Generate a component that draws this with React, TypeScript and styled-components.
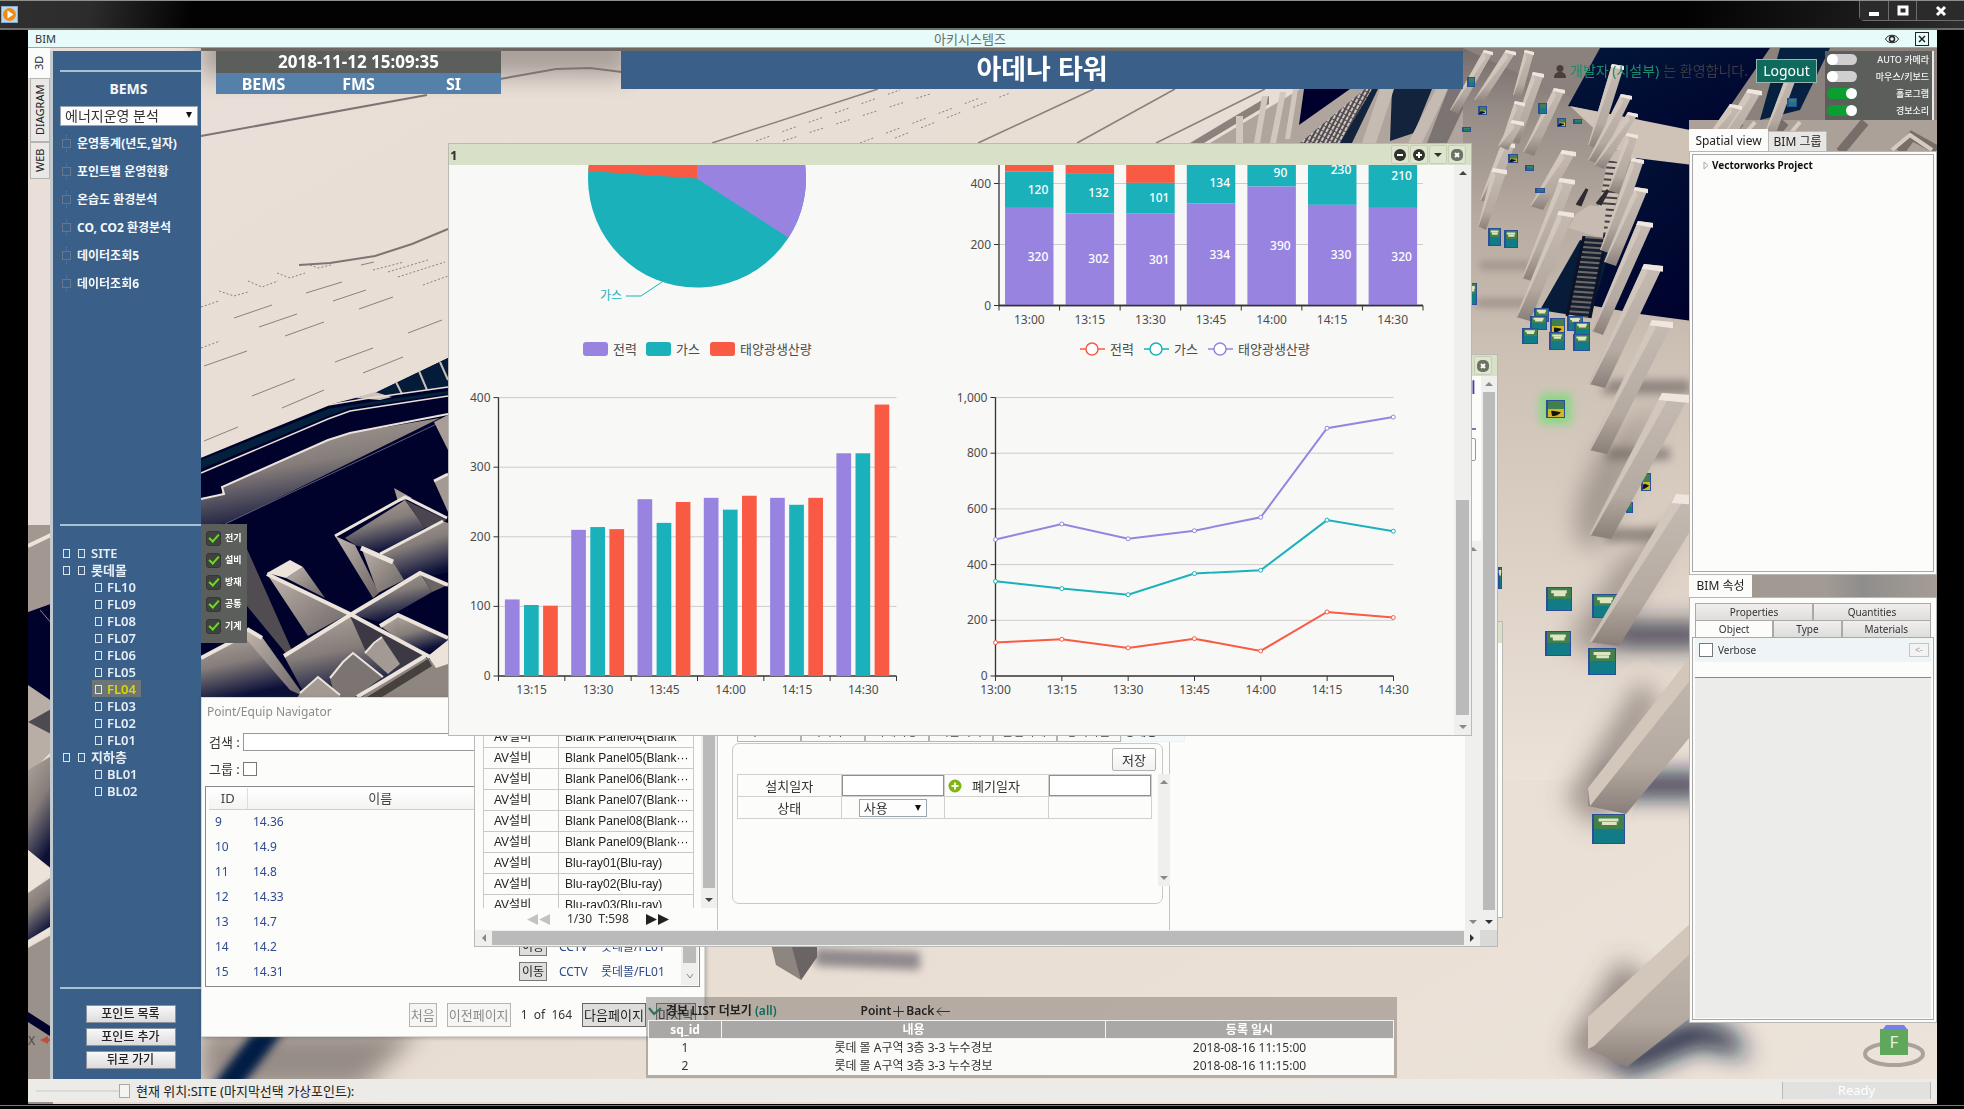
import React from 'react';
import styled, { createGlobalStyle, css } from 'styled-components';

const sans = `"Noto Sans", "Noto Sans CJK KR", sans-serif`;
const gulim = `"Liberation Sans", "Noto Sans CJK KR", sans-serif`;
const navy = '#3a5f88';
const slate = '#5b5e5b';
const purple = '#9884e0';
const teal = '#1ab1ba';
const red = '#f85a44';

const Global = createGlobalStyle`
  * { box-sizing: border-box; }
  body { margin: 0; background: #000; font: 12px/16px ${sans}; color: #333; overflow: hidden; }
  button, input, select { font-family: inherit; margin: 0; padding: 0; border-radius: 0; }
  h1, h2, p, ul { margin: 0; padding: 0; }
  ul { list-style: none; }
`;

/* ---------- frame ---------- */

const Page = styled.div`
  height: 100vh;
  display: flex;
  flex-direction: column;
  background: #000;
`;

const TitleBar = styled.header`
  height: 30px;
  flex: none;
  display: flex;
  justify-content: space-between;
  align-items: center;
  padding-left: 1px;
  border-top: 1px solid #8d8f8d;
  border-bottom: 2px solid #6c6c6c;
  background: linear-gradient(100deg, #303030 0, #2c2c2c 90px, #020202 190px, #020202 1660px, #1c1c1c 1850px, #2e2e2e 100%);
`;

const WindowButtons = styled.div`
  display: flex;
  align-self: flex-start;
  height: 20px;
  border: 1px solid #6d6d6d;
  border-top: 0;
  border-right: 0;
  border-radius: 0 0 0 5px;
`;

const WindowButton = styled.button<{ $wide?: boolean }>`
  width: ${p => (p.$wide ? 48 : 28)}px;
  border: 0;
  border-left: ${p => (p.$wide ? '1px solid #6d6d6d' : '0')};
  background: #2b2b2b;
  display: grid;
  place-items: center;
  & + & { border-left: 1px solid #6d6d6d; }
`;

const Desk = styled.div`
  flex: 1;
  min-height: 0;
  margin: 0 27px 0 28px;
  display: flex;
  flex-direction: column;
`;

const BottomEdge = styled.div`
  height: 4px;
  flex: none;
  margin-top: 1px;
  border-top: 1px solid #777;
`;

const AppBar = styled.div`
  height: 18px;
  flex: none;
  display: grid;
  grid-template-columns: 1fr auto 1fr;
  align-items: center;
  padding: 0 8px 0 7px;
  background: #e8fbfb;
  border-bottom: 1px solid #9fa5a2;
  font-size: 11px;
`;

const AppName = styled.h1`
  padding-right: 24px;
  font-size: 13px;
  font-weight: 400;
  color: #66706c;
`;

const AppTools = styled.div`
  display: flex;
  justify-content: flex-end;
  gap: 16px;
`;

const BareButton = styled.button`
  border: 0;
  background: none;
  display: grid;
  place-items: center;
`;

const Viewport = styled.div`
  position: relative;
  flex: 1;
  min-height: 0;
  display: flex;
  flex-direction: column;
  overflow: hidden;
  background: #e6dcd2;
`;

const SceneSvg = styled.svg`
  position: absolute;
  inset: 0;
  width: 100%;
  height: 100%;
`;

const Main = styled.div`
  position: relative;
  flex: 1;
  min-height: 0;
  display: flex;
`;

/* ---------- left ---------- */

const SideTabs = styled.nav`
  width: 22px;
  display: flex;
  flex-direction: column;
  align-items: flex-end;
`;

const SideTab = styled.button<{ $on?: boolean; $h: number }>`
  width: ${p => (p.$on ? 22 : 20)}px;
  height: ${p => p.$h}px;
  border: 1px solid ${p => (p.$on ? '#fbfbfa' : '#b4b4b2')};
  background: ${p => (p.$on ? '#fbfbfa' : '#e9e8e6')};
  font-size: 11px;
  line-height: 16px;
  color: #222;
  writing-mode: vertical-rl;
  transform: rotate(180deg);
`;

const Sidebar = styled.aside`
  width: 151px;
  margin-top: 3px;
  border-left: 3px solid #c3cbd0;
  background: ${navy};
  color: #f2f6fa;
  display: grid;
  grid-template-rows: 473fr 463fr 92px;
`;

const SideSection = styled.section`
  padding-left: 7px;
  display: flex;
  flex-direction: column;
  & + & > hr { margin-top: 0; }
`;

const Rule = styled.hr`
  width: 100%;
  margin: 19px 0 0;
  border: 0;
  border-top: 2px solid #aac0d3;
`;

const SideTitle = styled.h2`
  margin: 8px 0 8px;
  padding-right: 4px;
  font-size: 14px;
  line-height: 18px;
  text-align: center;
`;

const Picker = styled.div<{ $w?: number; $h: number }>`
  position: relative;
  width: ${p => (p.$w ? p.$w + 'px' : 'auto')};
  height: ${p => p.$h}px;
  display: inline-flex;
  &::after {
    content: '';
    position: absolute;
    right: 6px;
    top: 6px;
    border: 3px solid transparent;
    border-top: 6px solid #111;
    border-bottom: 0;
  }
  select {
    appearance: none;
    width: 100%;
    height: 100%;
    padding-left: 4px;
    border: 1px solid #9aa5ad;
    background: #fdfdfd;
    color: #333;
    font-size: ${p => (p.$w ? 13 : 14)}px;
    line-height: 16px;
  }
`;

const SidePicker = styled(Picker)`margin-right: 3px;`;

const Menu = styled.ul`
  margin-top: 3px;
`;

const MenuButton = styled(BareButton)`
  display: flex;
  align-items: center;
  gap: 5px;
  height: 28px;
  padding-left: 1px;
  color: #f4f8fb;
  font-size: 12px;
  font-weight: 700;
`;

const Tree = styled.ul`
  padding: 18px 0 0 2px;
`;

const TreeButton = styled(BareButton)<{ $child?: boolean; $on?: boolean }>`
  display: flex;
  align-items: center;
  gap: ${p => (p.$child ? 5 : 6)}px;
  height: 17px;
  margin-left: ${p => (p.$child ? 30 : 0)}px;
  padding: 0 5px 0 ${p => (p.$child ? 3 : 1)}px;
  background: ${p => (p.$on ? '#6d7577' : 'none')};
  color: ${p => (p.$on ? '#d8d800' : '#e6eef6')};
  font-size: 13px;
  font-weight: 600;
`;

const TreeBox = styled.i<{ $lead?: boolean }>`
  width: 7px;
  height: 9px;
  margin: 2px ${p => (p.$lead ? 2 : 0)}px 0 0;
  border: 1px solid #dbe5ee;
`;

const SideActions = styled.div`
  display: flex;
  flex-direction: column;
  align-items: center;
  gap: 5px;
  padding: 16px 0 0;
`;

const SideAction = styled.button`
  width: 90px;
  height: 18px;
  border: 1px solid #8b9299;
  background: linear-gradient(#f8f8f8, #dcdcdc);
  color: #222;
  font-size: 12px;
  line-height: 14px;
  font-weight: 500;
`;

/* ---------- stage ---------- */

const Stage = styled.div`
  flex: 1;
  min-width: 0;
  display: flex;
  flex-direction: column;
`;

const Top = styled.div`
  height: 78px;
  margin-top: 3px;
  padding: 0 3px 0 15px;
  display: flex;
  align-items: flex-start;
`;

const Clock = styled.div`
  width: 285px;
  background: #5480aa;
  color: #fff;
  font-weight: 700;
  text-align: center;
`;

const ClockTime = styled.div`
  height: 22px;
  background: ${slate};
  font-size: 17px;
  line-height: 22px;
`;

const ClockTabs = styled.nav`
  display: grid;
  grid-template-columns: repeat(3, 1fr);
  button {
    height: 21px;
    border: 0;
    background: none;
    color: #fff;
    font-size: 16px;
    line-height: 20px;
    font-weight: 700;
  }
`;

const Banner = styled.h2`
  flex: 1;
  height: 38px;
  margin-left: 120px;
  background: ${navy};
  color: #fff;
  font-size: 27px;
  line-height: 36px;
  font-weight: 700;
  text-align: center;
`;

const UserBar = styled.div`
  width: 354px;
  padding-top: 8px;
  display: flex;
  align-items: center;
  justify-content: flex-end;
  gap: 4px;
  font-size: 14px;
  color: #1a8d6d;
  span { color: #4f4a45; padding-right: 4px; opacity: 0.75; }
`;

const Logout = styled.button`
  width: 61px;
  height: 24px;
  border: 1px solid #9cb5ae;
  background: #0d6a5c;
  color: #fff;
  font-size: 14px;
  line-height: 20px;
`;

const Toggles = styled.div`
  width: 109px;
  height: 69px;
  margin-left: 8px;
  padding: 0 3px 0 2px;
  border-right: 2px solid #e9e9e7;
  background: ${slate};
`;

const ToggleRow = styled.label`
  height: 17px;
  display: flex;
  align-items: center;
  justify-content: space-between;
  color: #f4f4f4;
  font-size: 9px;
  line-height: 12px;
  font-weight: 500;
`;

const ToggleInput = styled.input`
  appearance: none;
  width: 30px;
  height: 11px;
  border-radius: 6px;
  background: #cfcfcf;
  display: flex;
  align-items: center;
  &::before {
    content: '';
    width: 11px;
    height: 11px;
    border-radius: 50%;
    background: #fff;
  }
  &:checked { background: #0a9f30; justify-content: flex-end; }
`;

const StageBody = styled.div`
  flex: 1;
  min-height: 0;
  display: flex;
  justify-content: space-between;
`;

const Layers = styled.div`
  width: 46px;
  height: 119px;
  margin-top: 395px;
  padding: 3px 5px;
  background: ${slate};
`;

const LayerRow = styled.label`
  height: 22px;
  display: flex;
  align-items: center;
  gap: 4px;
  color: #fff;
  font-size: 9px;
  font-weight: 700;
  white-space: nowrap;
`;

const LayerCheck = styled.input`
  appearance: none;
  width: 15px;
  height: 15px;
  flex: none;
  border: 1px solid #343634;
  border-radius: 3px;
  background: #3f423f;
  display: grid;
  place-items: center;
  &:checked::before {
    content: '';
    width: 4px;
    height: 8px;
    margin-top: -2px;
    border: solid #6fd92c;
    border-width: 0 2px 2px 0;
    transform: rotate(42deg);
  }
`;

/* ---------- right dock ---------- */

const Dock = styled.aside`
  width: 248px;
  margin-bottom: 56px;
  display: flex;
  flex-direction: column;
`;

const DockTabs = styled.div<{ $shade?: boolean }>`
  height: 22px;
  display: flex;
  align-items: flex-end;
  background: ${p => (p.$shade ? 'linear-gradient(90deg,#9f9890,#a29b94 55%,#8f8d8c 70%,#a59d95)' : 'none')};
`;

const DockTab = styled.button<{ $on?: boolean; $w: number }>`
  width: ${p => p.$w}px;
  height: ${p => (p.$on ? 22 : 20)}px;
  border: 1px solid ${p => (p.$on ? '#fbfbfa' : '#b9b9b7')};
  border-bottom: 0;
  background: ${p => (p.$on ? '#fcfcfb' : '#e7e6e4')};
  color: #222;
  font-size: 12px;
  line-height: 16px;
`;

const DockFrame = styled.div<{ $pad: number }>`
  flex: 1;
  min-height: 0;
  padding: ${p => p.$pad}px 2px 2px;
  background: #fcfcfb;
  border: 1px solid #b7b7b6;
  display: flex;
  flex-direction: column;
`;

const SpatialTree = styled.div`
  flex: 1;
  border: 1px solid #a8a8a8;
  padding: 3px 10px;
  font-size: 10px;
  font-weight: 700;
  color: #111;
  display: flex;
  align-items: flex-start;
  gap: 3px;
  line-height: 14px;
`;

const PropTabs = styled.div<{ $cols: string }>`
  display: grid;
  grid-template-columns: ${p => p.$cols};
  padding: 0 3px;
`;

const PropTab = styled.button<{ $on?: boolean }>`
  height: 17px;
  border: 1px solid #aaa9a8;
  border-bottom: 0;
  background: ${p => (p.$on ? '#fcfcfb' : 'linear-gradient(#f0efee,#dedddc)')};
  color: #333;
  font-size: 10px;
  line-height: 14px;
`;

const PropBody = styled.div`
  flex: 1;
  border: 1px solid #a8a8a8;
  padding: 0 2px 1px;
  display: flex;
  flex-direction: column;
`;

const VerboseRow = styled.div`
  height: 24px;
  padding: 0 2px 0 4px;
  background: #eff4f7;
  display: flex;
  align-items: center;
  justify-content: space-between;
  label { display: flex; align-items: center; gap: 5px; font-size: 10px; }
  button { width: 20px; height: 14px; border: 1px solid #c5c5c5; background: #f3f3f3; color: #999; font-size: 9px; line-height: 10px; }
`;

const Check = styled.input`
  appearance: none;
  width: 14px;
  height: 14px;
  border: 1px solid #777;
  background: #fff;
`;

const Blank = styled.div`
  flex: 1;
  margin-top: 15px;
  border-top: 1px solid #8a8a88;
  background: #ececeb;
`;

const StatusBar = styled.footer`
  position: relative;
  height: 23px;
  margin-bottom: 2px;
  padding: 0 6px 0 8px;
  flex: none;
  display: flex;
  align-items: center;
  gap: 6px;
  background: #edebe8;
  color: #222;
  font-size: 13px;
`;

const Slider = styled.input`
  appearance: none;
  width: 94px;
  height: 14px;
  background: linear-gradient(#dcdad7, #dcdad7) 0 50% / 83px 2px no-repeat;
  &::-webkit-slider-thumb {
    appearance: none;
    width: 11px;
    height: 14px;
    border: 1px solid #a9a9a7;
    background: #f5f4f2;
  }
`;

const Ready = styled.div`
  width: 149px;
  height: 17px;
  margin-left: auto;
  border: solid #b9b9b7;
  border-width: 0 1px;
  background: #e1e1e0;
  color: #fff;
  text-align: center;
`;

/* ---------- floating windows ---------- */

const Floating = styled.section<{ $x: number; $y: number; $w: number; $h: number }>`
  position: absolute;
  left: ${p => p.$x}px;
  top: ${p => p.$y}px;
  width: ${p => p.$w}px;
  height: ${p => p.$h}px;
  display: flex;
  flex-direction: column;
  background: #fcfcfb;
  border: 1px solid #b9bab6;
  overflow: hidden;
`;

const Shadowed = styled(Floating)`
  border-color: #d8d8d5;
  box-shadow: 1px 1px 4px #4446;
`;

const WinHead = styled.header`
  height: 21px;
  flex: none;
  padding: 0 5px 0 1px;
  display: flex;
  align-items: center;
  justify-content: space-between;
  background: #d8e1c7;
  font-size: 13px;
  font-weight: 700;
  div { display: flex; gap: 1px; }
`;

const HeadButton = styled.button`
  width: 18px;
  height: 19px;
  border: 1px solid #c6cfb5;
  border-radius: 2px;
  background: #dde5cf;
  display: grid;
  place-items: center;
`;

const WinBody = styled.div`
  flex: 1;
  min-height: 0;
  display: flex;
`;

const ChartGrid = styled.div`
  flex: 1;
  min-width: 0;
  display: grid;
  grid-template: 207px 363px / 503px 1fr;
  background: #f8f8f7;
  svg { width: 100%; height: 100%; display: block; }
`;

const Track = styled.div<{ $w: number; $h?: number }>`
  width: ${p => p.$w}px;
  height: ${p => (p.$h ? p.$h + 'px' : 'auto')};
  flex: none;
  padding: 6px 2px;
  background: #efefee;
  display: flex;
  flex-direction: column;
  align-items: center;
`;

const Thumb = styled.div<{ $top: number }>`
  flex: 1;
  width: 100%;
  margin: ${p => p.$top}px 0 10px;
  background: #bababa;
`;

const Gap = styled.div`flex: 1;`;

const Arrow = styled.i<{ $dir: 'up' | 'down' | 'left' | 'right'; $c?: string }>`
  border: 4px solid transparent;
  ${p => p.$dir === 'up' && css`border-bottom: 4px solid ${p.$c || '#888'}; border-top: 0;`}
  ${p => p.$dir === 'down' && css`border-top: 4px solid ${p.$c || '#888'}; border-bottom: 0;`}
  ${p => p.$dir === 'left' && css`border-right: 4px solid ${p.$c || '#888'}; border-left: 0;`}
  ${p => p.$dir === 'right' && css`border-left: 4px solid ${p.$c || '#888'}; border-right: 0;`}
`;

const HTrack = styled.div`
  height: 16px;
  flex: none;
  padding: 0 0 0 7px;
  display: flex;
  align-items: center;
  gap: 6px;
  background: #efefee;
`;

const HThumb = styled.div`
  flex: 1;
  height: 14px;
  background: #bababa;
`;

const Corner = styled.div`
  width: 17px;
  height: 16px;
  background: #d9d9d8;
`;

/* equipment window */

const EquipPane = styled.div`
  width: 243px;
  padding-left: 8px;
  border-right: 1px solid #c4c4c2;
  display: flex;
  flex-direction: column;
  justify-content: flex-end;
`;

const EquipList = styled.div`
  height: 182px;
  display: flex;
  gap: 7px;
  overflow: hidden;
`;

const EquipTable = styled.table`
  width: 212px;
  height: max-content;
  table-layout: fixed;
  border-collapse: collapse;
  font: 12px/16px ${gulim};
  color: #222;
  td { height: 21px; padding: 0 2px 0 6px; border: 1px solid #c9c9c7; white-space: nowrap; overflow: hidden; }
  td:first-child { width: 75px; padding-left: 10px; }
`;

const EquipPager = styled.div`
  height: 22px;
  padding-left: 44px;
  display: flex;
  align-items: center;
  gap: 17px;
  font-size: 12px;
  white-space: pre;
`;

const FormPane = styled.div`
  width: 452px;
  padding: 0 0 26px 14px;
  border-right: 1px solid #c4c4c2;
  display: flex;
  flex-direction: column;
  justify-content: flex-end;
`;

const FormTabs = styled.div`
  display: flex;
  padding-left: 5px;
  margin-bottom: 1px;
`;

const FormTab = styled.button<{ $on?: boolean }>`
  width: 64px;
  flex: none;
  height: 20px;
  border: 1px solid ${p => (p.$on ? '#eef4f5' : '#b4b4b2')};
  background: ${p => (p.$on ? '#f3f8f9' : '#fafaf9')};
  color: #444;
  font-size: 12px;
  font-weight: ${p => (p.$on ? 700 : 400)};
  text-align: left;
  padding-left: ${p => (p.$on ? 2 : 8)}px;
  line-height: 16px;
`;

const FormBox = styled.div`
  width: 431px;
  height: 161px;
  padding: 4px 0 0 4px;
  border: 1px solid #c9c9c7;
  border-radius: 7px;
`;

const SaveRow = styled.div`
  display: flex;
  justify-content: flex-end;
  padding-right: 6px;
  button {
    width: 44px;
    height: 23px;
    border: 1px solid #b2b2b0;
    border-radius: 2px;
    background: linear-gradient(#fff, #f1f1f0);
    color: #333;
    font-size: 13px;
    line-height: 18px;
  }
`;

const FormRow = styled.div`
  display: flex;
  gap: 6px;
  margin-top: 3px;
`;

const FormTable = styled.table`
  width: 415px;
  flex: none;
  height: 45px;
  table-layout: fixed;
  border-collapse: collapse;
  font-size: 13px;
  td, th { height: 22px; padding: 0; border: 1px solid #d0d0ce; text-align: center; font-weight: 400; line-height: 16px; }
  input { display: block; width: 100%; height: 21px; border: 1px solid #8f8f8d; background: #fff; }
`;

const PlusLabel = styled.div`
  display: flex;
  align-items: center;
  gap: 10px;
  padding-left: 3px;
`;

const RestPane = styled.div`
  flex: 1;
  display: flex;
  flex-direction: column;
`;

const RestHead = styled.div`
  height: 165px;
  padding: 2px 5px 0 200px;
  h2 { height: 52px; border-bottom: 2px solid #7f74bb; color: #553f9d; font-size: 14px; line-height: 18px; text-align: right; }
  button { display: block; width: 40px; height: 23px; margin: 8px 0 0 auto; border: 1px solid #999; border-radius: 2px; background: #fcfcfb; }
`;

/* navigator */

const NavTitle = styled.div`
  height: 30px;
  padding: 6px 0 0 5px;
  color: #8b8b89;
`;

const NavField = styled.div`
  height: 27px;
  padding-left: 7px;
  display: flex;
  align-items: center;
  gap: 3px;
  label { width: 31px; font-size: 13px; color: #333; white-space: nowrap; }
  input[type='text'] { flex: 1; height: 18px; margin-right: 20px; border: 1px solid #999; }
`;

const NavBox = styled.div`
  height: 201px;
  margin: 4px 4px 0 3px;
  padding: 1px 1px 1px 3px;
  border: 1px solid #8a8a88;
  display: flex;
`;

const NavTable = styled.table`
  flex: 1;
  height: max-content;
  table-layout: fixed;
  border-collapse: collapse;
  color: #2f4a8c;
  th { height: 21px; padding: 0; font-weight: 400; font-size: 13px; color: #444; background: linear-gradient(#fff, #f3f3f2); border-bottom: 1px solid #cfcfcd; }
  th:first-child { border-right: 1px solid #ddd; }
  td { height: 25px; padding: 0 0 0 6px; white-space: nowrap; }
  button { width: 28px; height: 19px; border: 1px solid #777; background: #dededd; color: #222; font-size: 12px; line-height: 14px; }
`;

const Pager = styled.div`
  flex: 1;
  display: flex;
  align-items: center;
  justify-content: flex-end;
  gap: 10px;
  padding: 6px 8px 0 0;
  font-size: 12px;
  color: #333;
  white-space: pre;
`;

const PageButton = styled.button<{ $w: number; $off?: boolean }>`
  width: ${p => p.$w}px;
  height: 24px;
  border: 1px solid ${p => (p.$off ? '#b5b5b3' : '#666')};
  background: ${p => (p.$off ? '#f5f5f4' : '#dededd')};
  color: ${p => (p.$off ? '#8d8d8b' : '#222')};
  font-size: 13px;
  line-height: 18px;
  white-space: nowrap;
`;

/* alarm list */

const Alarm = styled.section`
  position: absolute;
  left: 618px;
  top: 949px;
  width: 751px;
  height: 81px;
  padding: 5px 3px 3px 2px;
  background: rgba(110, 100, 94, 0.42);
`;

const AlarmHead = styled.div`
  height: 18px;
  display: flex;
  align-items: center;
  gap: 4px;
  color: #222;
  font-weight: 600;
  font-size: 12px;
  em { color: #0d6a5c; font-style: normal; }
  p { display: flex; align-items: center; gap: 2px; margin-left: 80px; }
`;

const AlarmTable = styled.table`
  width: 100%;
  table-layout: fixed;
  border-collapse: collapse;
  background: #fafaf9;
  color: #333;
  font-size: 12px;
  text-align: center;
  th { height: 18px; padding: 0; border: 1px solid #f4f4f3; background: #a9a8a6; color: #fff; line-height: 14px; }
  td { height: 18px; padding: 0; line-height: 16px; }
  th:nth-child(1) { width: 73px; }
  th:nth-child(3) { width: 288px; }
`;

const Cube = styled.button`
  position: absolute;
  right: 9px;
  bottom: 12px;
  width: 68px;
  height: 44px;
  border: 0;
  background: none;
`;

/* ---------- drawings ---------- */

/* top-left x, y, top width, bottom-left x, y, bottom width */
type Pillar = [number, number, number, number, number, number];

const pillars: Pillar[] = [
  [1484, 50, 9, 1450, 110, 8], [1506, 50, 10, 1474, 100, 8], [1525, 50, 9, 1513, 95, 8], [1533, 72, 11, 1510, 140, 9],
  [1515, 101, 10, 1500, 146, 9], [1554, 88, 11, 1523, 152, 11], [1612, 64, 12, 1588, 145, 10], [1621, 94, 11, 1588, 160, 11],
  [1628, 112, 10, 1594, 165, 10], [1748, 89, 14, 1700, 168, 14], [1730, 104, 12, 1698, 150, 12], [1790, 66, 10, 1762, 140, 10],
  [1502, 142, 13, 1480, 200, 12], [1512, 120, 12, 1498, 146, 10], [1493, 168, 14, 1478, 226, 8], [1562, 150, 14, 1530, 206, 13],
  [1560, 178, 15, 1522, 278, 13], [1627, 133, 11, 1608, 190, 11], [1632, 158, 12, 1600, 250, 12],
  [1635, 187, 13, 1604, 262, 12], [1559, 211, 15, 1516, 317, 14], [1638, 221, 15, 1592, 331, 11], [1644, 264, 19, 1589, 384, 16],
  [1652, 320, 21, 1589, 450, 18], [1662, 393, 28, 1589, 535, 22], [1676, 494, 36, 1589, 642, 30],
];

type Sign = [number, number, number, number, number?];

const signs: Sign[] = [
  [1488, 228, 13, 18], [1504, 230, 14, 18], [1538, 103, 9, 11], [1557, 118, 9, 9, 1], [1573, 119, 9, 5],
  [1478, 106, 9, 9, 1], [1508, 154, 10, 9, 1], [1525, 165, 9, 6], [1535, 188, 10, 5], [1467, 77, 8, 10], [1462, 127, 9, 5], [1466, 283, 11, 22],
  [1534, 308, 15, 14], [1530, 316, 17, 14], [1522, 328, 16, 16], [1567, 316, 16, 15], [1550, 318, 15, 16, 1],
  [1549, 332, 16, 18], [1574, 322, 16, 14], [1573, 334, 17, 17], [1546, 400, 19, 18, 1],
  [1546, 587, 26, 24], [1545, 631, 26, 25], [1498, 567, 4, 22], [1787, 98, 10, 9],
];

const frontSigns: Sign[] = [[1588, 639, 28, 25], [1593, 791, 32, 0]];

const lower: { pts: string; side: string }[] = [
  { pts: '1700,645 1700,725 1626,814 1588,806 1588,788', side: '1700,645 1700,668 1590,806 1588,788' },
  { pts: '1700,915 1700,1010 1627,1067 1588,1049 1588,1017', side: '1700,915 1700,944 1594,1046 1588,1049 1588,1017' },
];

const rooms = '#a39a93';
const rim = '#ece3da';

function SignMark({ s }: { s: Sign }) {
  const [x, y, w, h, cam] = s;
  return (
    <g>
      <rect x={x} y={y} width={w} height={h} fill="#2a4f98" />
      <rect x={x + 2} y={y + 1} width={w - 3} height={h / 2 - 1} fill="#417f4c" />
      <rect x={x + 2} y={y + h / 2} width={w - 3} height={h / 2 - 1} fill={cam ? '#d3b722' : '#127c86'} />
      {h > 12 && !cam ? <path d={`M${x + w * 0.2} ${y + h * 0.2}h${w * 0.6}M${x + w * 0.3} ${y + h * 0.32}h${w * 0.45}`} stroke="#dfe5bf" strokeWidth={h > 20 ? 3 : 2} /> : null}
      {cam ? <path d={`M${x + w * 0.3} ${y + h * 0.62}l${w * 0.45} ${h * 0.08}-3 ${h * 0.12}-${w * 0.25} ${h * 0.05}Z`} fill="#111" stroke="#111" /> : null}
    </g>
  );
}

function Scene() {
  return (
    <SceneSvg viewBox="28 48 1909 1056" preserveAspectRatio="xMinYMin slice" aria-hidden>
      <defs>
        <linearGradient id="floor" x1="0" y1="0" x2="1" y2="1">
          <stop offset="0" stopColor="#e9dfd8" /><stop offset=".55" stopColor="#e8ddd2" /><stop offset="1" stopColor="#ece3da" />
        </linearGradient>
        <linearGradient id="wall" x1="0" y1="0" x2="0.35" y2="1">
          <stop offset="0" stopColor="#b0a69e" /><stop offset=".5" stopColor="#857d7a" /><stop offset="1" stopColor="#0b1038" />
        </linearGradient>
        <linearGradient id="face" x1="0" y1="0" x2="1" y2="1">
          <stop offset="0" stopColor="#c0b5ac" /><stop offset="1" stopColor="#6b6464" />
        </linearGradient>
        <linearGradient id="post" x1="0" y1="0" x2="0" y2="1">
          <stop offset="0" stopColor="#c6bbb2" /><stop offset=".7" stopColor="#b5aaa1" /><stop offset="1" stopColor="#897f79" />
        </linearGradient>
        <linearGradient id="hall" x1="0" y1="0" x2="0" y2="1">
          <stop offset="0" stopColor="#756d6b" /><stop offset=".12" stopColor="#968c86" /><stop offset=".35" stopColor="#b9ada3" /><stop offset=".6" stopColor="#cdc1b6" /><stop offset="1" stopColor="#ddd1c6" />
        </linearGradient>
        <linearGradient id="hallEnd" x1="0" y1="0" x2="0" y2="1">
          <stop offset="0" stopColor="#ddd1c6" /><stop offset="1" stopColor="#ece2d8" />
        </linearGradient>
        <linearGradient id="deep" x1="0" y1="0" x2="1" y2="1">
          <stop offset="0" stopColor="#02173a" /><stop offset="1" stopColor="#00002c" />
        </linearGradient>
        <filter id="soft" x="-50%" y="-50%" width="200%" height="200%"><feGaussianBlur stdDeviation="12" /></filter>
        <filter id="glow" x="-50%" y="-50%" width="200%" height="200%"><feGaussianBlur stdDeviation="4" /></filter>
        <pattern id="steps" width="8" height="5" patternUnits="userSpaceOnUse" patternTransform="rotate(4)">
          <rect width="8" height="5" fill="#17202f" /><rect width="8" height="2" fill="#6d6a6c" />
        </pattern>
        <pattern id="lightSteps" width="8" height="6" patternUnits="userSpaceOnUse" patternTransform="rotate(4)">
          <rect width="8" height="6" fill="#cbbfb6" /><rect width="8" height="2" fill="#463f42" />
        </pattern>
        <pattern id="mesh" width="4" height="5" patternUnits="userSpaceOnUse" patternTransform="rotate(28)">
          <rect width="4" height="5" fill="#4e4a50" /><rect width="2" height="4" fill="#cfc5bd" />
        </pattern>
      </defs>
      <rect x="28" y="48" width="1909" height="1056" fill="url(#floor)" />

      <g fill="none" stroke="#7e7476" strokeWidth="2">
        <path d="M201 136 427 95M500 79 556 69 590 68 622 72M299 265 330 263 375 256 412 244 448 229" />
      </g>
      <g fill="none" stroke="#8b817b" strokeWidth="1">
        <path d="M712 143 878 89M978 143 1094 89M1077 143 1175 89M1156 143 1265 89" strokeWidth="1.5" />
        <path d="M234 318 272 305M259 327 297 314M285 336 324 322M204 366 247 351M252 396 295 379M282 408 324 390M204 441 238 427M306 293 342 282M333 301 366 290M359 309 393 297M335 362 373 348M363 373 403 357M408 333 442 320M361 265 374 262" />
        <path d="M219 291 234 296 248 292M248 281 262 287 278 281M277 273 290 278 305 273M310 265 318 268 331 265M201 307 219 301M201 348 220 341M373 270 404 262M388 272 428 260M398 277 445 262M423 285 448 276" strokeDasharray="2 2" />
        <path d="M756 141 900 90M783 141 930 94M860 143 985 96M895 138 1010 93" strokeDasharray="2 2 2 2 2 2 2 14" />
      </g>

      <path d="M201 457 328 405 375 393 448 358V700H201Z" fill="#00022c" />
      <path d="M375 393 448 358V388L380 397Z" fill="#041b3a" />
      <path d="M355 398 375 392 392 397 380 400Z" fill="#cfc4bb" />
      <path d="M396 382 402 394M419 371 427 390M440 362 448 380" stroke="#c8beb5" strokeWidth="2" />
      <path d="M201 457 328 405 370 398 448 387M201 473 328 419 350 411 448 396" fill="none" stroke="#e8dfd6" strokeWidth="1.500" />
      <path d="M201 460 328 409 370 402 448 391V394L350 408 328 416 201 469Z" fill="#03213c" />
      <path d="M201 498 222 495 222 487 328 440 350 433 440 418 228 523 201 527Z" fill="url(#wall)" />
      <path d="M201 499 224 494 222 487 328 440 350 433 448 414" fill="none" stroke={rim} strokeWidth="2" />
      <path d="M225 524 445 420" stroke="#5d5f78" strokeWidth="1" />
      <path d="M434 422 448 415V450Z" fill="#a89e97" />
      <path d="M434 481 448 474V512Z" fill={rooms} /><path d="M448 474 434 481" stroke={rim} strokeWidth="3" />

      <path d="M394 488 412 498 398 502Z" fill={rooms} />
      <path d="M335 536 355 545 379 593 373 598Z" fill="url(#face)" />
      <path d="M345 538 405 500 425 528 380 554 361 547 355 545Z" fill="url(#wall)" />
      <path d="M405 500 447 520 425 528Z" fill="#4b4550" />
      <path d="M380 554 443 521 448 523V572L404 582 393 562Z" fill="url(#wall)" />
      <path d="M361 547 393 562 404 580 378 593Z" fill="url(#face)" />
      <path d="M335 536 405 497 447 518M380 554 443 521" fill="none" stroke={rim} strokeWidth="3" />
      <path d="M361 548 393 562" stroke={rim} strokeWidth="5" />

      <path d="M247 549 302 673 247 606Z" fill="#514b52" />
      <path d="M267 574 350 613 308 636Z" fill="url(#face)" />
      <path d="M303 567 325 598 286 578Z" fill="url(#face)" />
      <path d="M267 573 290 560 303 567 286 578Z" fill={rim} />

      <path d="M350 614 420 573 432 592 380 622Z" fill="url(#wall)" />
      <path d="M420 573 448 585 432 592Z" fill="#6c6566" />
      <path d="M380 626 398 615 412 636 400 640Z" fill="url(#face)" />
      <path d="M398 615 448 638V648L425 652 400 640Z" fill="url(#wall)" />
      <path d="M284 656 350 616 423 655 357 697H306Z" fill="url(#wall)" />
      <path d="M350 616 423 655 400 668 366 652Z" fill="#3c3844" />
      <path d="M201 658 247 634 302 697H201Z" fill="url(#wall)" />
      <path d="M247 628 262 637 305 697 290 690 247 640Z" fill="url(#face)" />
      <path d="M365 653 382 637 400 664 388 674Z" fill={rooms} />
      <path d="M330 678 343 662 353 653 383 677 355 697H335Z" fill="#7c7472" />
      <path d="M300 693 318 677 340 695V700H296Z" fill={rooms} />
      <path d="M365 653 374 643 382 637M330 678 343 662 353 653 383 677M300 693 318 677 340 695" fill="none" stroke={rim} strokeWidth="2" />
      <path d="M357 700 423 657 448 664V700Z" fill="#8f8680" />
      <path d="M367 697 428 659 432 666 382 697Z" fill="#46413f" />
      <path d="M428 656 448 640V664L436 668Z" fill={rim} />
      <path d="M267 574 350 614 430 657M284 656 350 615 420 573 448 585M380 626 398 615 448 638M357 697 425 656M201 658 235 640M247 629 262 638" fill="none" stroke={rim} strokeWidth="4" />

      <g>
        <rect x="28" y="48" width="25" height="480" fill="#e9dfd8" />
        <path d="M28 525H53V603L28 612Z" fill="#a39891" /><path d="M28 546 53 534" stroke={rim} strokeWidth="4" />
        <path d="M28 612 53 603V700H28Z" fill="#00022c" /><path d="M40 610 53 625" stroke="#8b8580" />
        <path d="M28 685 53 702V750L28 775Z" fill="#b9aea5" /><path d="M28 722 53 708V735Z" fill="#4d4a52" />
        <path d="M28 770 53 755V870L28 850Z" fill="url(#wall)" /><path d="M28 850 53 872 28 893Z" fill={rim} />
        <path d="M28 893 53 876V925L28 940Z" fill="url(#wall)" /><path d="M28 944 53 928" stroke={rim} strokeWidth="4" />
        <path d="M28 948 53 934V1104H28Z" fill="#9b918b" /><path d="M28 1012 53 1028V1038L28 1022Z" fill="#00022c" />
        <path d="M40 1040 48 1036V1044Z" fill="#c1503a" /><path d="M45 1040H53" stroke="#c1503a" strokeWidth="3" />
        <text x="28" y="1045" fontSize="12" fontFamily="Noto Sans" fill="#4b4545">X</text>
      </g>

      <rect x="201" y="30" width="430" height="46" fill="#7d7470" opacity=".6" filter="url(#soft)" />
      <path d="M201 49.500H1463" stroke="#6f6764" strokeWidth="3" />
      <path d="M1210 143 1300 89H1480V143Z" fill="#b0a59d" />
      <path d="M1304 89H1350L1299 125Z" fill="#00002c" />
      <path d="M1300 143 1365 89H1372L1348 143Z" fill="url(#mesh)" />
      <path d="M1235 116 1269 96V104L1204 143H1190Z" fill="#8b827d" />
      <path d="M1236 116h7v27h-7ZM1262 96h6l-8 47h-6ZM1280 92h6l-10 51h-6ZM1293 89h5l-8 50h-5Z" fill="#d1c7be" />
      <path d="M1340 143 1372 89H1378L1352 143ZM1392 89h40l-18 44-24 8Z" fill="#14233c" />
      <path d="M1380 89h14l-18 54h-14ZM1436 89h12l-26 54h-14Z" fill="#c6bbb2" />
      <path d="M1448 89h15v20l-16 34h-20Z" fill="#7c7472" />

      <path d="M1463 48H1700V560H1463Z" fill="url(#hall)" />
      <path d="M1463 560H1700V780H1463Z" fill="url(#hallEnd)" />
      <path d="M1463 48H1937V152H1689Z" fill="#8b827d" />
      <path d="M1600 48H1770L1700 150 1640 120 1568 106Z" fill="url(#deep)" />
      <path d="M1570 106 1640 120 1700 132V165L1625 158Z" fill="#cfc2b6" />
      <path d="M1780 48H1830L1800 110 1760 120Z" fill="#06203f" />
      <path d="M1636 158 1700 166V322L1640 314 1560 300 1600 240Z" fill="url(#deep)" />
      <path d="M1540 310 1580 240 1610 250 1590 318Z" fill="#061c38" />
      <path d="M1608 158 1627 160 1607 238 1596 222Z" fill="url(#lightSteps)" />
      <path d="M1584 236 1606 238 1588 318 1567 314Z" fill="url(#steps)" />
      <path d="M1584 236 1567 316M1606 238 1590 318" stroke="#0e1226" strokeWidth="3" />
      <path d="M1608 153 1620 150 1627 155 1623 163 1607 160ZM1576 214 1590 205 1606 208 1603 238 1568 228Z" fill="#c8bcb2" />
      <path d="M1610 152 1609 142 1606 155M1627 155 1630 143 1624 157M1580 206 1587 189 1577 205M1600 205 1608 190 1597 204" stroke="#2d2b31" strokeWidth="3" fill="none" />
      <path d="M1689 120H1937V152H1689Z" fill="#aca199" />
      <path d="M1715 152 1740 122M1760 152 1785 122M1840 152 1865 122M1900 152 1912 136 1937 150" stroke="#776e6a" strokeWidth="9" fill="none" />
      <path d="M1730 152 1755 122M1775 152 1800 122M1892 150 1910 135 1932 150" stroke="#d6cbc1" strokeWidth="4" fill="none" />

      <g fill="#5e5552" opacity=".55" filter="url(#glow)">
        <path d="M1480 263h70v5h-70ZM1475 300h60v6h-60ZM1610 380h80v14h-90ZM1610 448h60v12h-66ZM1610 528h60v14h-66Z" />
      </g>
      <path d="M1578 500 1575 540 1600 550 1660 400 1600 450ZM1565 640 1600 660 1680 520 1620 560Z" fill="#6f6661" opacity=".5" filter="url(#soft)" />
      <g filter="url(#soft)">
        <path d="M1610 625H1710V645H1610Z" fill="#1d2437" />
        <path d="M1565 800 1640 680 1660 700 1600 830Z" fill="#6f655f" opacity=".6" />
        <path d="M1600 775H1710V795H1615Z" fill="#0c1733" />
        <path d="M1565 1050 1620 960 1650 980 1600 1070Z" fill="#5a504c" opacity=".6" />
        <path d="M1600 1062 1690 1020 1730 1030 1750 1058 1700 1045 1630 1075Z" fill="#0a1a38" />
      </g>
      <SignMark s={[1641, 473, 10, 18, 1]} />
      <SignMark s={[1626, 502, 7, 11]} />
      <SignMark s={[1592, 594, 26, 24]} />
      {pillars.map(([x, y, w, bx, by, bw], i) => (
        <g key={i}>
          <path d={`M${x} ${y}L${x + w} ${y + 2}L${bx + bw} ${by + 4}L${bx} ${by}Z`} fill="url(#post)" />
          <path d={`M${x} ${y}L${x + w * 0.18} ${y + 8}L${bx + bw * 0.1} ${by}L${bx} ${by}Z`} fill="#d6cbc1" opacity=".8" />
          <path d={`M${x} ${y}L${x + w} ${y + 2}L${x + w} ${y + 3 + w / 4}L${x - w / 8} ${y + w / 4}Z`} fill="#efe7df" />
        </g>
      ))}
      {lower.map((p, i) => (
        <g key={i}><polygon points={p.pts} fill="url(#post)" /><polygon points={p.side} fill="#d3c7bc" /></g>
      ))}
      <rect x="1540" y="394" width="31" height="30" fill="#58e65a" opacity=".6" filter="url(#glow)" />
      {signs.map((s, i) => <SignMark key={i} s={s} />)}
      <SignMark s={[1588, 648, 28, 27]} />
      <SignMark s={[1592, 814, 33, 30]} />

      <path d="M201 1030H420L360 1090H201Z" fill="#968c86" filter="url(#soft)" />
      <path d="M205 1095 255 1030 285 1030 235 1095Z" fill="#041a44" filter="url(#glow)" />
      <path d="M815 948 920 952V970L815 966Z" fill="#6b6670" filter="url(#glow)" opacity=".7" />
      <path d="M770 940 776 965 801 980 817 957V940Z" fill="#8d8580" /><path d="M790 940 801 980 817 957V940Z" fill="#6a6465" />
    </SceneSvg>
  );
}

const ink = '#4c4c4c';
const font = { fontFamily: 'Noto Sans, Noto Sans CJK KR, sans-serif', fontSize: 12 };

const hours = ['13:00', '13:15', '13:30', '13:45', '14:00', '14:15', '14:30'];

interface AxesProps { x: number; right: number; y0: number; step: number; labels: string[]; cats: string[]; mode: 'band' | 'point' }

function Axes({ x, right, y0, step, labels, cats, mode }: AxesProps) {
  const n = mode === 'band' ? cats.length : cats.length - 1;
  const bw = (right - x) / n;
  const top = y0 - step * (labels.length - 1);
  return (
    <g {...font} fill={ink}>
      {labels.map((l, i) => (
        <g key={l}>
          {i > 0 && <path d={`M${x} ${y0 - i * step}H${right}`} stroke="#ccc" />}
          <path d={`M${x - 5} ${y0 - i * step}H${x}`} stroke="#333" />
          <text x={x - 8} y={y0 - i * step + 4} textAnchor="end">{l}</text>
        </g>
      ))}
      <path d={`M${x} ${top}V${y0}H${right}`} fill="none" stroke="#333" strokeWidth="1.3" />
      {Array.from({ length: n + 1 }, (_, i) => <path key={i} d={`M${x + i * bw} ${y0}v5`} stroke="#333" />)}
      {cats.map((c, i) => <text key={c} x={x + (mode === 'band' ? i + 0.5 : i) * bw} y={y0 + 18} textAnchor="middle">{c}</text>)}
    </g>
  );
}

function PieChart() {
  const items: [number, string, string][] = [[583, purple, '전력'], [646, teal, '가스'], [710, red, '태양광생산량']];
  return (
    <svg viewBox="449 165 503 207" role="img" aria-label="pie">
      <circle cx="697" cy="178.5" r="109" fill={teal} />
      <path d="M697 178.5V69.5A109 109 0 0 1 788.5 237.7Z" fill={purple} />
      <path d="M697 178.5V69.5A109 109 0 0 0 588.3 171Z" fill={red} />
      <path d="M662 282 641 296H626" fill="none" stroke={teal} />
      <g {...font}>
        <text x="600" y="300" fill={teal}>가스</text>
        {items.map(([x, c, t]) => (
          <g key={t}><rect x={x} y="342" width="25" height="14" rx="3" fill={c} /><text x={x + 30} y="354" fontSize="13" fill={ink}>{t}</text></g>
        ))}
      </g>
    </svg>
  );
}

function StackChart() {
  const a = [320, 302, 301, 334, 390, 330, 320];
  const b = [120, 132, 101, 134, 90, 230, 210];
  const k = 0.305;
  const y0 = 305.5;
  const items: [number, string, string][] = [[1092, red, '전력'], [1156, teal, '가스'], [1220, purple, '태양광생산량']];
  return (
    <svg viewBox="952 165 502 207" role="img" aria-label="stack">
      <Axes x={999} right={1423} y0={y0} step={61} labels={['0', '200', '400', '600']} cats={hours} mode="band" />
      {a.map((v, i) => {
        const x = 999 + i * 60.6 + 6;
        const yb = y0 - (v + b[i]) * k;
        return (
          <g key={i} {...font} fill="#fff" fontWeight="500" textAnchor="middle">
            <rect x={x} y="100" width="48.5" height={yb - 100} fill={red} />
            <rect x={x} y={yb} width="48.5" height={b[i] * k} fill={teal} />
            <rect x={x} y={y0 - v * k} width="48.5" height={v * k} fill={purple} />
            <text x={x + 33} y={y0 - (v * k) / 2 + 4}>{v}</text>
            <text x={x + 33} y={y0 - (v + b[i] / 2) * k + 4}>{b[i]}</text>
          </g>
        );
      })}
      <path d={`M999 ${y0}H1423`} stroke="#333" strokeWidth="1.3" />
      {items.map(([x, c, t]) => (
        <g key={t} {...font}>
          <path d={`M${x - 12} 349h25`} stroke={c} strokeWidth="1.5" />
          <circle cx={x} cy="349" r="6" fill="#fff" stroke={c} strokeWidth="1.5" />
          <text x={x + 18} y="354" fontSize="13" fill={ink}>{t}</text>
        </g>
      ))}
    </svg>
  );
}

function BarChart() {
  const data = [[110, 102, 101], [210, 214, 211], [254, 220, 250], [256, 239, 259], [256, 246, 256], [320, 320, 390]];
  const y0 = 676;
  const k = 0.696;
  return (
    <svg viewBox="449 372 503 363" role="img" aria-label="bars">
      <Axes x={498.5} right={896.5} y0={y0} step={69.6} labels={['0', '100', '200', '300', '400']} cats={hours.slice(1)} mode="band" />
      {data.map((g, i) => g.map((v, j) => (
        <rect key={`${i}-${j}`} x={498.5 + i * 66.3 + 6.4 + j * 19.1} y={y0 - v * k} width="14.7" height={v * k} fill={[purple, teal, red][j]} />
      )))}
    </svg>
  );
}

function LineChart() {
  const rows: [string, number[]][] = [
    [red, [120, 132, 101, 134, 90, 230, 210]],
    [teal, [340, 314, 292, 368, 380, 560, 520]],
    [purple, [490, 546, 493, 522, 570, 890, 930]],
  ];
  const px = (i: number) => 995.5 + i * 66.3;
  const py = (v: number) => 676 - v * 0.2784;
  return (
    <svg viewBox="952 372 502 363" role="img" aria-label="lines">
      <Axes x={995.5} right={1393.5} y0={676} step={55.7} labels={['0', '200', '400', '600', '800', '1,000']} cats={hours} mode="point" />
      {rows.map(([c, v]) => (
        <g key={c}>
          <polyline points={v.map((n, i) => `${px(i)},${py(n)}`).join(' ')} fill="none" stroke={c} strokeWidth="2" />
          {v.map((n, i) => <circle key={i} cx={px(i)} cy={py(n)} r="2" fill="#fff" stroke={c} />)}
        </g>
      ))}
    </svg>
  );
}

function Glyph({ kind }: { kind: 'minus' | 'plus' | 'close' }) {
  const d = { minus: 'M4 7H10', plus: 'M4 7H10M7 4V10', close: 'M5 5 9 9M9 5 5 9' }[kind];
  return (
    <svg width="14" height="14" viewBox="0 0 14 14">
      <rect x="1" y="1" width="12" height="12" rx={kind === 'close' ? 5 : 6} fill={kind === 'close' ? '#6d7265' : '#2f322b'} />
      <path d={d} stroke="#fff" strokeWidth="2" />
    </svg>
  );
}

function AddIcon() {
  return (
    <svg width="14" height="14" viewBox="0 0 14 14">
      <circle cx="7" cy="7" r="6.5" fill="#7fb414" /><path d="M7 3.5V10.5M3.5 7H10.5" stroke="#f3f9dd" strokeWidth="2" />
    </svg>
  );
}

function MenuIcon() {
  return (
    <svg width="11" height="17" viewBox="0 0 11 17" fill="none" stroke="#67768a">
      <path d="M5.5 0V17" strokeDasharray="1 1" /><rect x="1.5" y="4.5" width="8" height="8" fill={navy} />
    </svg>
  );
}

/* ---------- windows ---------- */

function Navigator() {
  const rows = [['9', '14.36'], ['10', '14.9'], ['11', '14.8'], ['12', '14.33'], ['13', '14.7'], ['14', '14.2'], ['15', '14.31']];
  return (
    <Shadowed $x={173} $y={649} $w={504} $h={340}>
      <NavTitle>Point/Equip Navigator</NavTitle>
      <NavField><label htmlFor="q">검색 :</label><input id="q" type="text" /></NavField>
      <NavField><label htmlFor="grp">그룹 :</label><Check id="grp" type="checkbox" /></NavField>
      <NavBox>
        <NavTable>
          <colgroup><col width="38" /><col width="266" /><col width="40" /><col width="42" /><col /></colgroup>
          <thead><tr><th>ID</th><th>이름</th><th /><th /><th /></tr></thead>
          <tbody>
            {rows.map(([id, name]) => (
              <tr key={id}><td>{id}</td><td>{name}</td><td><button>이동</button></td><td>CCTV</td><td>롯데몰/FL01</td></tr>
            ))}
          </tbody>
        </NavTable>
        <Track $w={17}>
          <Thumb $top={10} />
          <svg width="8" height="6" viewBox="0 0 8 6"><path d="M1 1 4 5 7 1" fill="none" stroke="#888" /></svg>
        </Track>
      </NavBox>
      <Pager>
        <PageButton $w={28} $off>처음</PageButton>
        <PageButton $w={64} $off>이전페이지</PageButton>
        <span>1  of  164</span>
        <PageButton $w={64}>다음페이지</PageButton>
        <PageButton $w={40}>마지막</PageButton>
      </Pager>
    </Shadowed>
  );
}

const equipment = [
  'Blank Panel04(Blank', 'Blank Panel05(Blank···', 'Blank Panel06(Blank···', 'Blank Panel07(Blank···', 'Blank Panel08(Blank···',
  'Blank Panel09(Blank···', 'Blu-ray01(Blu-ray)', 'Blu-ray02(Blu-ray)', 'Blu-ray03(Blu-ray)',
];
const formTabs = ['비고', '이력자료', '자재사양', '기술이력', '운전자재', '정비자원', '경제정보'];

function EquipmentWindow() {
  return (
    <Floating $x={446} $y={306} $w={1024} $h={593}>
      <WinHead><span /><div><HeadButton aria-label="close"><Glyph kind="close" /></HeadButton></div></WinHead>
      <WinBody>
        <EquipPane>
          <EquipList>
            <EquipTable><tbody>{equipment.map(e => <tr key={e}><td>AV설비</td><td>{e}</td></tr>)}</tbody></EquipTable>
            <Track $w={16}><Thumb $top={0} /><Arrow $dir="down" $c="#444" /></Track>
          </EquipList>
          <EquipPager>
            <svg width="23" height="11" viewBox="0 0 23 11" fill="#c3c3c1"><path d="M11 0V11L0 5.5ZM23 0V11L12 5.5Z" /></svg>
            <span>1/30  T:598</span>
            <svg width="23" height="11" viewBox="0 0 23 11" fill="#222"><path d="M0 0V11L11 5.5ZM12 0V11L23 5.5Z" /></svg>
          </EquipPager>
        </EquipPane>
        <FormPane>
          <FormTabs>{formTabs.map((t, i) => <FormTab key={t} $on={i === 6}>{t}</FormTab>)}</FormTabs>
          <FormBox>
            <SaveRow><button>저장</button></SaveRow>
            <FormRow>
              <FormTable>
                <tbody>
                  <tr>
                    <th><label htmlFor="d1">설치일자</label></th><td><input id="d1" /></td>
                    <th><PlusLabel><AddIcon /><label htmlFor="d2">폐기일자</label></PlusLabel></th><td><input id="d2" /></td>
                  </tr>
                  <tr>
                    <th><label htmlFor="st">상태</label></th>
                    <td><Picker $w={68} $h={18}><select id="st"><option>사용</option></select></Picker></td><td /><td />
                  </tr>
                </tbody>
              </FormTable>
              <Track $w={12} $h={112}><Arrow $dir="up" /><Gap /><Arrow $dir="down" /></Track>
            </FormRow>
          </FormBox>
        </FormPane>
        <RestPane>
          <RestHead><h2>설비관리</h2><button aria-label="detail" /></RestHead>
          <WinBody><Gap /><Track $w={16}><Arrow $dir="up" /><Gap /><Arrow $dir="down" /></Track></WinBody>
        </RestPane>
        <Track $w={16}><Arrow $dir="up" /><Thumb $top={6} /><Arrow $dir="down" $c="#333" /></Track>
      </WinBody>
      <HTrack><Arrow $dir="left" /><HThumb /><Arrow $dir="right" $c="#333" /><Corner /></HTrack>
    </Floating>
  );
}

function ChartWindow() {
  return (
    <Floating $x={420} $y={95} $w={1024} $h={593}>
      <WinHead>
        <span>1</span>
        <div>
          <HeadButton aria-label="minus"><Glyph kind="minus" /></HeadButton>
          <HeadButton aria-label="plus"><Glyph kind="plus" /></HeadButton>
          <HeadButton aria-label="menu"><Arrow $dir="down" $c="#2f322b" /></HeadButton>
          <HeadButton aria-label="close"><Glyph kind="close" /></HeadButton>
        </div>
      </WinHead>
      <WinBody>
        <ChartGrid><PieChart /><StackChart /><BarChart /><LineChart /></ChartGrid>
        <Track $w={17}><Arrow $dir="up" $c="#444" /><Thumb $top={325} /><Arrow $dir="down" /></Track>
      </WinBody>
    </Floating>
  );
}

function AlarmList() {
  return (
    <Alarm>
      <AlarmHead>
        <svg width="14" height="9" viewBox="0 0 14 9"><path d="M1 1 6 7 13 1" fill="none" stroke="#2c6f62" strokeWidth="2" /></svg>
        <span>경보 LIST 더보기 <em>(all)</em></span>
        <p>
          Point
          <svg width="11" height="11" viewBox="0 0 11 11"><path d="M5.5 0V11M0 5.5H11" stroke="#333" /></svg>
          Back
          <svg width="14" height="9" viewBox="0 0 14 9"><path d="M14 4.5H1M5 .5 1 4.5 5 8.5" fill="none" stroke="#333" /></svg>
        </p>
      </AlarmHead>
      <AlarmTable>
        <thead><tr><th>sq_id</th><th>내용</th><th>등록 일시</th></tr></thead>
        <tbody>
          {['1', '2'].map(n => <tr key={n}><td>{n}</td><td>롯데 몰 A구역 3층 3-3 누수경보</td><td>2018-08-16 11:15:00</td></tr>)}
        </tbody>
      </AlarmTable>
    </Alarm>
  );
}

const menu = ['운영통계(년도,일자)', '포인트별 운영현황', '온습도 환경분석', 'CO, CO2 환경분석', '데이터조회5', '데이터조회6'];
const tree: [string, boolean][] = [
  ['SITE', false], ['롯데몰', false], ['FL10', true], ['FL09', true], ['FL08', true], ['FL07', true], ['FL06', true], ['FL05', true],
  ['FL04', true], ['FL03', true], ['FL02', true], ['FL01', true], ['지하층', false], ['BL01', true], ['BL02', true],
];
const toggles: [string, boolean][] = [['AUTO 카메라', false], ['마우스/키보드', false], ['홀로그램', true], ['경보소리', true]];

export default function App() {
  return (
    <Page>
      <Global />
      <TitleBar>
        <svg width="17" height="17" viewBox="0 0 17 17">
          <rect width="17" height="17" fill="#7fb0da" /><rect x="1" y="1" width="15" height="15" fill="#b9d8ef" />
          <circle cx="8.5" cy="8.5" r="6.5" fill="#f08a12" /><path d="M6.5 4.5V12.5L12.5 8.5Z" fill="#fff" />
        </svg>
        <WindowButtons>
          <WindowButton aria-label="minimize"><svg width="12" height="12"><rect x="1" y="7" width="10" height="4" fill="#fff" /></svg></WindowButton>
          <WindowButton aria-label="maximize"><svg width="12" height="12"><rect x="2" y="2" width="8" height="7" fill="none" stroke="#fff" strokeWidth="3" /></svg></WindowButton>
          <WindowButton $wide aria-label="close"><svg width="12" height="12"><path d="M2 2 10 10M10 2 2 10" stroke="#fff" strokeWidth="3" /></svg></WindowButton>
        </WindowButtons>
      </TitleBar>
      <Desk>
        <AppBar>
          <span>BIM</span>
          <AppName>아키시스템즈</AppName>
          <AppTools>
            <BareButton aria-label="view">
              <svg width="14" height="14" viewBox="0 0 14 14" fill="none" stroke="#222"><path d="M.5 7C3 2 11 2 13.5 7 11 12 3 12 .5 7Z" /><circle cx="7" cy="7" r="2.5" strokeWidth="1.5" /></svg>
            </BareButton>
            <BareButton aria-label="close view">
              <svg width="14" height="14" viewBox="0 0 14 14" fill="none" stroke="#222"><rect x=".5" y=".5" width="13" height="13" /><path d="M4 4 10 10M10 4 4 10" strokeWidth="1.5" /></svg>
            </BareButton>
          </AppTools>
        </AppBar>
        <Viewport>
          <Scene />
          <Main>
            <SideTabs>
              <SideTab $on $h={30}>3D</SideTab>
              <SideTab $h={64}>DIAGRAM</SideTab>
              <SideTab $h={37}>WEB</SideTab>
            </SideTabs>
            <Sidebar>
              <SideSection>
                <Rule />
                <SideTitle>BEMS</SideTitle>
                <SidePicker $h={20}>
                  <select aria-label="분석"><option>에너지운영 분석</option></select>
                </SidePicker>
                <Menu>{menu.map(m => <li key={m}><MenuButton><MenuIcon />{m}</MenuButton></li>)}</Menu>
              </SideSection>
              <SideSection>
                <Rule />
                <Tree>
                  {tree.map(([t, child]) => (
                    <li key={t}>
                      <TreeButton $child={child} $on={t === 'FL04'}>{!child && <TreeBox $lead />}<TreeBox />{t}</TreeButton>
                    </li>
                  ))}
                </Tree>
              </SideSection>
              <SideSection>
                <Rule />
                <SideActions>
                  <SideAction>포인트 목록</SideAction>
                  <SideAction>포인트 추가</SideAction>
                  <SideAction>뒤로 가기</SideAction>
                </SideActions>
              </SideSection>
            </Sidebar>
            <Stage>
              <Top>
                <Clock>
                  <ClockTime>2018-11-12 15:09:35</ClockTime>
                  <ClockTabs><button>BEMS</button><button>FMS</button><button>SI</button></ClockTabs>
                </Clock>
                <Banner>아데나 타워</Banner>
                <UserBar>
                  <svg width="12" height="13" viewBox="0 0 12 13" fill="#4a3f38"><circle cx="6" cy="3.5" r="3.5" /><path d="M0 13C0 8 3 7 6 7S12 8 12 13Z" /></svg>
                  개발자 (시설부)<span>는 환영합니다.</span>
                  <Logout>Logout</Logout>
                </UserBar>
                <Toggles>
                  {toggles.map(([t, on]) => <ToggleRow key={t}><ToggleInput type="checkbox" defaultChecked={on} />{t}</ToggleRow>)}
                </Toggles>
              </Top>
              <StageBody>
                <Layers>
                  {['전기', '설비', '방재', '공통', '기계'].map(t => <LayerRow key={t}><LayerCheck type="checkbox" defaultChecked />{t}</LayerRow>)}
                </Layers>
                <Dock>
                  <DockTabs><DockTab $on $w={79}>Spatial view</DockTab><DockTab $w={59}>BIM 그룹</DockTab></DockTabs>
                  <DockFrame $pad={2}>
                    <SpatialTree>
                      <svg width="6" height="14" viewBox="0 0 6 14"><path d="M1 4V11L5 7.5Z" fill="none" stroke="#aaa" /></svg>
                      Vectorworks Project
                    </SpatialTree>
                  </DockFrame>
                  <DockTabs $shade><DockTab $on $w={63}>BIM 속성</DockTab></DockTabs>
                  <DockFrame $pad={5}>
                    <PropTabs $cols="1fr 1fr"><PropTab>Properties</PropTab><PropTab>Quantities</PropTab></PropTabs>
                    <PropTabs $cols="78fr 68fr 89fr"><PropTab $on>Object</PropTab><PropTab>Type</PropTab><PropTab>Materials</PropTab></PropTabs>
                    <PropBody>
                      <VerboseRow><label><Check type="checkbox" />Verbose</label><button>&lt;-</button></VerboseRow>
                      <Blank />
                    </PropBody>
                  </DockFrame>
                </Dock>
              </StageBody>
            </Stage>
            <Cube aria-label="front">
              <svg width="68" height="44" viewBox="0 0 68 44">
                <ellipse cx="34" cy="31" rx="29" ry="11" fill="none" stroke="#a8a39d" strokeWidth="4" />
                <path d="M23 6 26 2H44L47 6Z" fill="#7580ee" /><rect x="20" y="6" width="28" height="26" fill="#5fa75a" />
                <text x="34" y="25" textAnchor="middle" fontSize="17" fontFamily="Noto Sans" fill="#e7f0e0">F</text>
              </svg>
            </Cube>
          </Main>
          <StatusBar>
            <Slider type="range" defaultValue={100} aria-label="위치" />
            <span>현재 위치:SITE (마지막선택 가상포인트):</span>
            <Ready>Ready</Ready>
          </StatusBar>
          <Navigator />
          <Floating $x={900} $y={573} $w={575} $h={297}><WinHead /></Floating>
          <EquipmentWindow />
          <AlarmList />
          <ChartWindow />
        </Viewport>
      </Desk>
      <BottomEdge />
    </Page>
  );
}
